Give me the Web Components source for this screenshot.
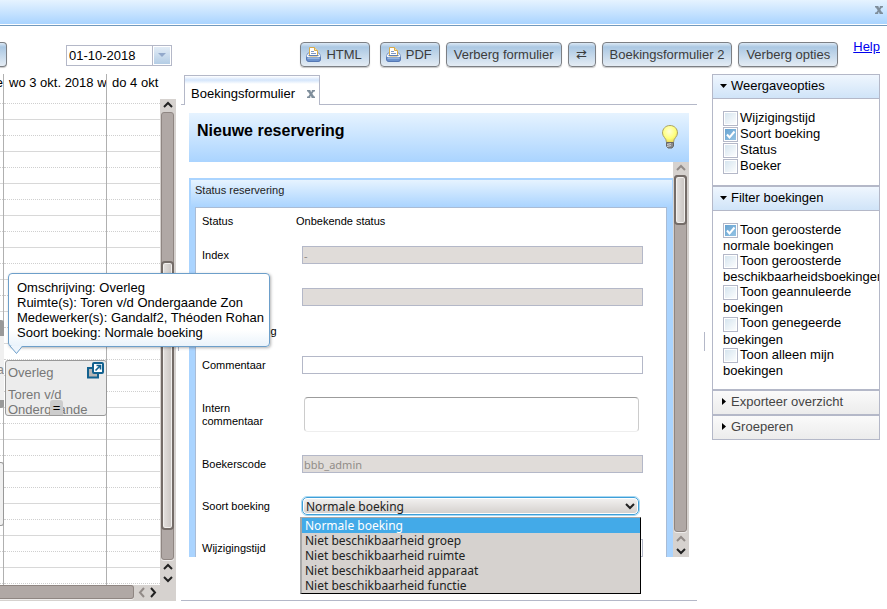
<!DOCTYPE html>
<html lang="nl">
<head>
<meta charset="utf-8">
<title>Boekingen</title>
<style>
  body {
    margin: 0;
    background: #fff;
    color: #000;
    font: 13px/15px "Liberation Sans", Arial, sans-serif;
    --line: #b4b8c8;
    --blue: #aad4ff;
    --blue-light: #e6f3ff;
  }
</style>
</head>
<body>
<booking-app></booking-app>

<script>
function attach(el, html) {
  const template = document.createElement('template');
  template.innerHTML = html;
  el.attachShadow({mode: 'open'});
  el.shadowRoot.appendChild(template.content.cloneNode(true));
}

class CloseIcon extends HTMLElement {
  constructor() {
    super();
    attach(this, `
    <style>
      :host {
        display: block;
      }
      button {
        display: block;
        padding: 0;
        border: none;
        background: none;
      }
      svg {
        display: block;
      }
    </style>
    <button aria-label="Sluiten">
      <svg width="8" height="8" viewBox="0 0 8 8" fill="none" stroke="#7f8e9b">
        <path d="M1.8 .8 L6.2 7.2" stroke-width="2.4"/>
        <path d="M6.2 .8 L1.8 7.2" stroke-width="1.8"/>
        <path d="M0 .7 H3.4 M4.8 .7 H8 M0 7.300 H3.2 M4.6 7.300 H8" stroke-width="1.4"/>
      </svg>
    </button>
    `);
  }
}
customElements.define('close-icon', CloseIcon);

class TitleBar extends HTMLElement {
  constructor() {
    super();
    attach(this, `
    <style>
      :host {
        display: flex;
        flex: none;
        justify-content: flex-end;
        box-sizing: border-box;
        height: 26px;
        padding: 6px 4px 0;
        border-bottom: 1px solid #7299bd;
        background: linear-gradient(var(--blue-light), var(--blue)) 0 0 / 100% 24px no-repeat;
      }
    </style>
    <close-icon></close-icon>
    `);
  }
}
customElements.define('title-bar', TitleBar);

class ToolButton extends HTMLElement {
  constructor() {
    super();
    attach(this, `
    <style>
      :host {
        display: block;
      }
      button {
        display: flex;
        align-items: center;
        justify-content: center;
        gap: 5px;
        box-sizing: border-box;
        min-width: 28px;
        height: 25px;
        padding: 0 7px 1px;
        border: 1px solid #7c7f84;
        border-radius: 4px;
        background: linear-gradient(#dce9f5, #abc8e3 4px, #e4ecf4);
        box-shadow: 0 1px 1px #c8c8c8;
        color: #3c3c3c;
        font: inherit;
        white-space: nowrap;
      }
      :host([printer]) button {
        padding-left: 5px;
      }
      :host([cut]) button {
        min-width: 7px;
        padding: 0;
        border-left: none;
        border-radius: 0 4px 4px 0;
      }
      svg {
        display: none;
      }
      :host([printer]) svg {
        display: block;
      }
    </style>
    <button>
      <svg width="15" height="15" viewBox="0 0 15 15">
        <path d="M2 6 L.5 8.5 V12 Q.5 14.5 3 14.5 H12 Q14.5 14.5 14.5 12 V8.5 L13 6 Z" fill="#f3f7fc" stroke="#7d97c4"/>
        <path d="M.5 10.5 H14.5 V12 Q14.5 14.5 12 14.5 H3 Q.5 14.5 .5 12 Z" fill="#6d94cf" stroke="#5578b4"/>
        <path d="M1.5 11 H13.5" stroke="#c2d8f4"/>
        <path d="M3.5 9 V.5 H8.5 L11.5 3.5 V9 Z" fill="#fff" stroke="#d8ab4c"/>
        <path d="M8.5 .5 V3.5 H11.5" fill="#f5e2ac" stroke="#d8ab4c"/>
        <path d="M5 4.5 H8 M5 6.5 H10" stroke="#7d97c4"/>
        <path d="M2.5 8.5 H12.5" stroke="#5d7eb6"/>
      </svg>
      <slot></slot>
    </button>
    `);
    if (this.hasAttribute('name')) {
      this.shadowRoot.querySelector('button').setAttribute('aria-label', this.getAttribute('name'));
    }
  }
}
customElements.define('tool-button', ToolButton);

class DateBox extends HTMLElement {
  constructor() {
    super();
    attach(this, `
    <style>
      :host {
        display: flex;
        box-sizing: border-box;
        width: 106px;
        height: 21px;
        border: 1px solid var(--line);
      }
      input {
        flex: 1;
        min-width: 0;
        padding: 0 2px;
        border: none;
        font: inherit;
        color: inherit;
      }
      button {
        display: flex;
        align-items: center;
        justify-content: center;
        width: 18px;
        padding: 0 0 2px;
        border: 1px solid #fff;
        outline: 1px solid var(--line);
        background: linear-gradient(#e2ecf6, #b4cde5);
      }
    </style>
    <input type="text" aria-label="Datum" value="01-10-2018">
    <button aria-label="Kalender">
      <svg width="8" height="4"><path d="M0 0 H8 L4 4 Z" fill="#93a9cb"/></svg>
    </button>
    `);
  }
}
customElements.define('date-box', DateBox);

class ToolBar extends HTMLElement {
  constructor() {
    super();
    attach(this, `
    <style>
      :host {
        display: flex;
        flex: none;
        align-items: flex-start;
        box-sizing: border-box;
        height: 48px;
        padding: 13px 7px 0 0;
      }
      date-box {
        margin: 6px 0 0 59px;
      }
      tool-button {
        margin-top: 3px;
      }
      .actions {
        display: flex;
        gap: 6px;
        margin: 0 15px 0 auto;
      }
      .html {
        margin-right: 4px;
      }
      a {
        color: #00e;
      }
    </style>
    <tool-button cut name="Volgende"></tool-button>
    <date-box></date-box>
    <div class="actions">
      <tool-button printer class="html">HTML</tool-button>
      <tool-button printer>PDF</tool-button>
      <tool-button>Verberg formulier</tool-button>
      <tool-button>⇄</tool-button>
      <tool-button>Boekingsformulier 2</tool-button>
      <tool-button>Verberg opties</tool-button>
    </div>
    <a href="#">Help</a>
    `);
  }
}
customElements.define('tool-bar', ToolBar);

// --before, --thumb and --after share out the trough
class ScrollBar extends HTMLElement {
  constructor() {
    super();
    attach(this, `
    <style>
      :host {
        display: flex;
        flex-direction: column;
        flex: none;
        width: 16px;
        background: #d6d2cf;
      }
      :host([horizontal]) {
        flex-direction: row;
        width: auto;
        height: 16px;
      }
      .trough {
        display: flex;
        flex-direction: column;
        flex: 1;
        box-sizing: border-box;
        min-height: 0;
        margin: 0 2px 0 1px;
        border: 1px solid #8f8682;
        border-radius: 3px;
        background: #b0a8a5;
        box-shadow: 0 1px 0 #efedec;
      }
      :host([horizontal]) .trough {
        margin: 0 0 2px;
        border-left: none;
        border-radius: 0 3px 3px 0;
      }
      .before {
        flex: var(--before, 0) 0 0;
      }
      .thumb {
        flex: var(--thumb, 0) 0 0;
        box-sizing: border-box;
        margin: -1px;
        border: 2px solid #746c68;
        border-radius: 4px;
        background: linear-gradient(90deg, #e4e1df, #c9c4c1);
        box-shadow: inset 0 0 0 1px #f1efed;
      }
      :host([horizontal]) .thumb {
        display: none;
      }
      .after {
        flex: var(--after, 1) 0 0;
      }
      svg {
        display: block;
        flex: none;
        fill: none;
        stroke: #222;
        stroke-width: 2;
      }
      .off, :host([at-top]) .up {
        stroke: #928b88;
      }
      .side, :host([horizontal]) .vert {
        display: none;
      }
      :host([horizontal]) .side {
        display: block;
      }
    </style>
    <svg class="vert up" width="16" height="13"><path d="M4 8 L8 4 L12 8"/></svg>
    <div class="trough"><div class="before"></div><div class="thumb"></div><div class="after"></div></div>
    <svg class="vert up" width="16" height="13"><path d="M4 9 L8 5 L12 9"/></svg>
    <svg class="vert" width="16" height="12"><path d="M4 4 L8 8 L12 4"/></svg>
    <svg class="side off" width="13" height="16"><path d="M10 3 L6 7.5 L10 12"/></svg>
    <svg class="side" width="29" height="16"><path d="M4 3 L8 7.5 L4 12"/></svg>
    `);
  }
}
customElements.define('scroll-bar', ScrollBar);

class DayColumn extends HTMLElement {
  constructor() {
    super();
    attach(this, `
    <style>
      :host {
        display: flex;
        flex-direction: column;
        min-width: 0;
        border-right: 1px solid #b0b0b0;
      }
      :host([last]) {
        border-right: none;
      }
      .name {
        flex: none;
        box-sizing: border-box;
        height: 25px;
        padding: 1px 0 0 5px;
        overflow: hidden;
        white-space: nowrap;
      }
      :host([cut]) .name {
        padding-left: 0;
        direction: rtl;
      }
      .hours {
        position: relative;
        flex: 1;
        min-height: 0;
      }
      .rows {
        height: 100%;
        overflow: hidden;
      }
      .rows div {
        box-sizing: border-box;
        height: 16px;
        border-bottom: 1px solid #d8d8d8;
      }
      .rows div:nth-child(odd) {
        border-bottom: 1px dotted #cfcfcf;
      }
      .rows div:first-child {
        height: 5px;
      }
    </style>
    <div class="name"></div>
    <div class="hours">
      <div class="rows">${'<div></div>'.repeat(31)}</div>
      <slot></slot>
    </div>
    `);
    this.shadowRoot.querySelector('.name').textContent = this.getAttribute('name');
  }
}
customElements.define('day-column', DayColumn);

class BookingEvent extends HTMLElement {
  constructor() {
    super();
    attach(this, `
    <style>
      :host {
        display: block;
        position: absolute;
        box-sizing: border-box;
        overflow: hidden;
        border: 1px solid #999;
        border-radius: 3px;
        background: #ececec;
        color: #777;
      }
      header {
        display: flex;
        justify-content: space-between;
        padding: 1px 2px 0;
      }
      header span {
        padding-top: 3px;
      }
      p {
        margin: 7px 2px 0;
      }
      .grip {
        position: absolute;
        left: 44px;
        bottom: 0;
        width: 13px;
        height: 15px;
        background: #ccc;
        border-radius: 3px 3px 0 0;
        color: #000;
        text-align: center;
      }
    </style>
    <header>
      <span><slot name="title"></slot></span>
      <svg width="17" height="17" viewBox="0 0 17 17">
        <path d="M5 6 H1 V15.5 H11 V12" fill="#b5b5b5" stroke="#12618f" stroke-width="2"/>
        <rect x="6" y="1" width="10" height="10" rx="1" fill="#fff" stroke="#12618f" stroke-width="2"/>
        <path d="M8.5 8.5 L13 4 M9.5 3.5 H13.5 V7.5" fill="none" stroke="#12618f" stroke-width="1.6"/>
      </svg>
    </header>
    <p><slot></slot></p>
    <div class="grip">=</div>
    `);
  }
}
customElements.define('booking-event', BookingEvent);

class WeekCalendar extends HTMLElement {
  constructor() {
    super();
    attach(this, `
    <style>
      :host {
        display: flex;
        flex-direction: column;
        flex: none;
        width: 176px;
      }
      .top {
        display: flex;
        flex: 1;
        min-height: 0;
      }
      .days {
        display: grid;
        grid-template-columns: 4px 103px 1fr;
        flex: 1;
        min-width: 0;
      }
      .vertical {
        margin-top: 25px;
        --before: 150;
        --thumb: 268;
        --after: 30;
      }
      .sliver {
        position: absolute;
        left: 0;
        box-sizing: border-box;
        width: 4px;
        overflow: hidden;
        color: #888;
        background: #f0f0f0;
      }
      .past {
        top: 221px;
        height: 88px;
        border: solid #999;
        border-width: 16px 0 8px;
        border-radius: 0 3px 3px 0;
        padding-top: 26px;
        direction: rtl;
      }
      .later {
        top: 363px;
        height: 64px;
        border: 1px solid #999;
        border-left: none;
        border-radius: 0 3px 3px 0;
      }
      booking-event {
        left: 1px;
        top: 261px;
        width: 102px;
        height: 56px;
      }
    </style>
    <div class="top">
      <div class="days">
        <day-column cut name="e">
          <div class="sliver past">a</div>
          <div class="sliver later"></div>
        </day-column>
        <day-column name="wo 3 okt. 2018 w">
          <booking-event><span slot="title">Overleg</span>Toren v/d Ondergaande</booking-event>
        </day-column>
        <day-column last name="do 4 okt"></day-column>
      </div>
      <scroll-bar class="vertical"></scroll-bar>
    </div>
    <scroll-bar horizontal></scroll-bar>
    `);
  }
}
customElements.define('week-calendar', WeekCalendar);

class InfoBalloon extends HTMLElement {
  constructor() {
    super();
    attach(this, `
    <style>
      :host {
        display: block;
        position: absolute;
        z-index: 2;
        padding: 6px 5px 6px 8px;
        border: 1px solid #6d9fca;
        border-radius: 4px;
        background: linear-gradient(#fff 78%, #eaf3fb);
        box-shadow: 1px 1px 3px rgba(0, 0, 0, .3);
        white-space: nowrap;
      }
      svg {
        position: absolute;
        left: 1px;
        top: 100%;
      }
    </style>
    <slot></slot>
    <svg width="13" height="9"><path d="M0 0 L6.5 7.5 L12.5 0" fill="#eef5fc" stroke="#6d9fca"/></svg>
    `);
  }
}
customElements.define('info-balloon', InfoBalloon);

class PaneSplitter extends HTMLElement {
  constructor() {
    super();
    attach(this, `
    <style>
      :host {
        display: flex;
        flex: none;
        align-items: center;
        justify-content: center;
        box-sizing: border-box;
        width: 5px;
        padding-top: 8px;
      }
      div {
        width: 1px;
        height: 19px;
        background: var(--line);
      }
    </style>
    <div></div>
    `);
  }
}
customElements.define('pane-splitter', PaneSplitter);

class FormRow extends HTMLElement {
  constructor() {
    super();
    attach(this, `
    <style>
      :host {
        display: flex;
        align-items: center;
        box-sizing: border-box;
        min-height: 42px;
        padding: 0 23px 0 6px;
        font-size: 11px;
        line-height: 13px;
      }
      :host([compact]) {
        min-height: 26px;
      }
      label {
        flex: none;
        box-sizing: border-box;
        width: 94px;
        padding-right: 10px;
      }
      input, textarea, select {
        flex: 1;
        box-sizing: border-box;
        min-width: 0;
        margin: 0 0 0 6px;
        font-family: "Noto Sans", sans-serif;
      }
      input {
        height: 18px;
        padding: 0 1px;
        border: 1px solid var(--line);
        font-size: 11px;
      }
      input:disabled {
        background: #e0dcd9;
        color: #918c88;
      }
      textarea {
        height: 35px;
        margin: 11px 4px 11px 8px;
        border: 1px solid #ccc;
        border-top-color: #9c9c9c;
        border-bottom-color: #eee;
        border-radius: 4px;
        resize: none;
      }
      .pick {
        flex: 1;
        min-width: 0;
        display: flex;
        flex-direction: column;
        margin-right: 4px;
      }
      select {
        flex: none;
        height: 18px;
        padding: 0 3px;
        appearance: none;
        border: 1px solid #3f9fd8;
        border-radius: 5px;
        outline: 1px solid #a8d8f2;
        background: linear-gradient(#f3f2f1, #d3cfcc);
        box-shadow: inset 0 0 0 1px #fff;
        color: #222;
        font-size: 12px;
      }
      .arrow {
        align-self: flex-end;
        height: 0;
        margin-right: 4px;
      }
      .arrow svg {
        display: block;
        position: relative;
        top: -12px;
        pointer-events: none;
      }
      /* no offsets: it opens where it stands in the flow, outside the scroller's clip */
      .options {
        position: absolute;
        z-index: 1;
        box-sizing: border-box;
        margin: 20px 0 0 4px;
        border: 1px solid #000;
        border-top-color: #a8a8a8;
        border-left: 2px solid #a8a8a8;
        background: #d6d2cf;
        color: #222;
        font: 12px/15px "Noto Sans", sans-serif;
      }
      .options div {
        padding: 0 3px;
        white-space: nowrap;
      }
      .options .selected {
        background: #43aae8;
        color: #fff;
      }
    </style>
    <label for="field"></label>
    `);
    this.shadowRoot.querySelector('label').textContent = this.getAttribute('label');
    this.addField(this.getAttribute('type'));
  }

  addField(type) {
    const root = this.shadowRoot;
    let field;
    if (type == 'text') {
      root.appendChild(document.createElement('slot'));
      return;
    } else if (type == 'select') {
      this.addSelect();
      return;
    } else if (type == 'area') {
      field = document.createElement('textarea');
    } else {
      field = document.createElement('input');
      field.type = 'text';
      field.value = this.getAttribute('value') || '';
      field.disabled = this.hasAttribute('disabled');
    }
    field.id = 'field';
    if (this.hasAttribute('name')) {
      field.setAttribute('aria-label', this.getAttribute('name'));
    }
    root.appendChild(field);
  }

  addSelect() {
    const names = this.getAttribute('options').split('|');
    const pick = document.createElement('div');
    pick.className = 'pick';
    pick.innerHTML = `
      <div class="options" role="listbox" aria-label="Soort boeking">
        ${names.map((n, i) => `<div role="option"${i == 0 ? ' class="selected" aria-selected="true"' : ''}>${n}</div>`).join('')}
      </div>
      <select id="field">${names.map((n) => `<option>${n}</option>`).join('')}</select>
      <div class="arrow"><svg width="10" height="7" fill="none" stroke="#222" stroke-width="2"><path d="M1 1 L5 5 L9 1"/></svg></div>
    `;
    this.shadowRoot.appendChild(pick);
    const select = pick.querySelector('select');
    const options = pick.querySelector('.options');
    new ResizeObserver(() => {
      options.style.width = select.offsetWidth + 4 + 'px';
    }).observe(select);
    select.addEventListener('keydown', (e) => {
      if (e.key == 'Escape') {
        options.hidden = true;
      }
    });
  }
}
customElements.define('form-row', FormRow);

class BookingForm extends HTMLElement {
  constructor() {
    super();
    attach(this, `
    <style>
      :host {
        display: flex;
        flex-direction: column;
        flex: 1;
        min-width: 0;
        box-sizing: border-box;
        padding-top: 1px;
        border-bottom: 1px solid var(--line);
      }
      .tabs {
        display: flex;
        flex: none;
        height: 30px;
      }
      .tabs::before, .tabs::after {
        content: "";
        width: 3px;
        border-bottom: 1px solid var(--line);
      }
      .tabs::after {
        flex: 1;
      }
      .tab {
        display: flex;
        align-items: center;
        gap: 12px;
        padding: 6px 4px 0 6px;
        border: 1px solid var(--line);
        border-bottom: none;
        background: linear-gradient(#fff, #d4e5fb 4px, #fff 8px);
      }
      .content {
        display: flex;
        flex-direction: column;
        flex: 1;
        min-height: 0;
        padding: 8px 8px 43px;
      }
      .heading {
        display: flex;
        flex: none;
        justify-content: space-between;
        box-sizing: border-box;
        height: 49px;
        padding: 8px 10px 0 8px;
        background: linear-gradient(var(--blue-light), var(--blue));
      }
      h1 {
        margin: 0;
        font-size: 16px;
        line-height: 19px;
      }
      .heading svg {
        margin-top: 3px;
      }
      .scroller {
        display: flex;
        flex: 1;
        min-height: 0;
      }
      .view {
        flex: 1;
        min-width: 0;
        overflow: hidden;
      }
      section {
        margin-top: 16px;
        padding: 0 4px 4px;
        border: 2px solid var(--blue);
        border-right-width: 1px;
        padding-right: 5px;
        background: linear-gradient(var(--blue-light), var(--blue) 27px);
      }
      h2 {
        margin: 0;
        font-size: 11px;
        line-height: 13px;
        font-weight: normal;
        padding: 4px 0 10px;
        color: #222;
      }
      .rows {
        border: 1px solid #a9bcd6;
        background: #fff;
      }
      scroll-bar {
        --thumb: 47;
        --after: 310;
      }
    </style>
    <div class="tabs">
      <div class="tab">Boekingsformulier <close-icon></close-icon></div>
    </div>
    <div class="content">
      <div class="heading">
        <h1>Nieuwe reservering</h1>
        <svg width="18" height="26" viewBox="0 0 18 26">
          <defs>
            <radialGradient id="glow" cx=".45" cy=".35" r=".6">
              <stop offset="0" stop-color="#ffffd8"/>
              <stop offset=".7" stop-color="#ffff7c"/>
              <stop offset="1" stop-color="#eedf60"/>
            </radialGradient>
          </defs>
          <path d="M9 1.5 C4.5 1.5 1.5 4.8 1.5 9 C1.5 13 5.5 14 5.5 18.5 H12.5 C12.5 14 16.5 13 16.5 9 C16.5 4.8 13.5 1.5 9 1.5 Z" fill="url(#glow)" stroke="#aaa36a"/>
          <path d="M5.5 18.5 H12.5 V22 L11 24 H7 L5.5 22 Z" fill="#8a8a8a" stroke="#666"/>
          <path d="M6 20.5 L10 19.5 M6 22.5 L10 21.5" stroke="#d0d0d0"/>
        </svg>
      </div>
      <div class="scroller">
        <div class="view">
          <section>
            <h2>Status reservering</h2>
            <div class="rows">
              <form-row compact label="Status" type="text">Onbekende status</form-row>
              <form-row label="Index" value="-" disabled></form-row>
              <form-row name="Omschrijving" disabled></form-row>
              <form-row compact label="Terugkoppeling" type="text"></form-row>
              <form-row label="Commentaar"></form-row>
              <form-row label="Intern commentaar" type="area"></form-row>
              <form-row label="Boekerscode" value="bbb_admin" disabled></form-row>
              <form-row label="Soort boeking" type="select" options="Normale boeking|Niet beschikbaarheid groep|Niet beschikbaarheid ruimte|Niet beschikbaarheid apparaat|Niet beschikbaarheid functie"></form-row>
              <form-row label="Wijzigingstijd"></form-row>
            </div>
          </section>
        </div>
        <scroll-bar at-top></scroll-bar>
      </div>
    </div>
    `);
  }
}
customElements.define('booking-form', BookingForm);

class OptionCheck extends HTMLElement {
  constructor() {
    super();
    attach(this, `
    <style>
      :host {
        display: block;
      }
      label {
        display: block;
      }
      input {
        appearance: none;
        box-sizing: border-box;
        width: 15px;
        height: 15px;
        margin: 0 2px 0 0;
        border: 1px solid var(--line);
        background: linear-gradient(135deg, #d3e3ee, #fff);
        box-shadow: inset 0 0 0 1px #fff;
        vertical-align: middle;
      }
      input:checked {
        background: url('data:image/svg+xml,<svg xmlns="http://www.w3.org/2000/svg" width="13" height="13"><path d="M3 6.5 L5.5 9.5 L10.5 3.5" fill="none" stroke="white" stroke-width="2"/></svg>') center no-repeat,
          linear-gradient(135deg, #64a0cf, #98c6e6);
      }
    </style>
    <label><input type="checkbox"><slot></slot></label>
    `);
    this.shadowRoot.querySelector('input').checked = this.hasAttribute('checked');
  }
}
customElements.define('option-check', OptionCheck);

class OptionPane extends HTMLElement {
  constructor() {
    super();
    attach(this, `
    <style>
      :host {
        display: block;
        border: 1px solid var(--line);
        overflow: hidden;
      }
      button {
        display: flex;
        align-items: center;
        gap: 4px;
        width: 100%;
        height: 23px;
        padding: 0 0 2px 7px;
        border: none;
        background: linear-gradient(#fafafa, #ececec);
        color: #444;
        font: inherit;
      }
      svg {
        fill: #000;
        transform: rotate(-90deg);
      }
      .body {
        display: none;
        padding: 11px 10px;
        border-top: 1px solid var(--line);
      }
      :host([open]) button {
        background: linear-gradient(#eff6fe, #d0e4f8);
        color: #000;
      }
      :host([open]) svg {
        transform: none;
      }
      :host([open]) .body {
        display: block;
      }
    </style>
    <button><svg width="7" height="7"><path d="M0 2 H7 L3.5 6 Z"/></svg><span></span></button>
    <div class="body"><slot></slot></div>
    `);
    this.shadowRoot.querySelector('span').textContent = this.getAttribute('name');
    this.shadowRoot.querySelector('button').addEventListener('click', () => {
      this.toggleAttribute('open');
    });
  }
}
customElements.define('option-pane', OptionPane);

class BookingApp extends HTMLElement {
  constructor() {
    super();
    attach(this, `
    <style>
      :host {
        display: flex;
        flex-direction: column;
        box-sizing: border-box;
        height: 100vh;
        padding-bottom: 8px;
        overflow: hidden;
      }
      main {
        position: relative;
        display: flex;
        flex: 1;
        min-height: 0;
        padding-right: 7px;
      }
      aside {
        flex: none;
        width: 168px;
      }
      .wide {
        width: 15px;
      }
      info-balloon {
        left: 8px;
        top: 199px;
      }
    </style>
    <title-bar></title-bar>
    <tool-bar></tool-bar>
    <main>
      <week-calendar></week-calendar>
      <pane-splitter></pane-splitter>
      <booking-form></booking-form>
      <pane-splitter class="wide"></pane-splitter>
      <aside>
        <option-pane open name="Weergaveopties">
          <option-check>Wijzigingstijd</option-check>
          <option-check checked>Soort boeking</option-check>
          <option-check>Status</option-check>
          <option-check>Boeker</option-check>
        </option-pane>
        <option-pane open name="Filter boekingen">
          <option-check checked>Toon geroosterde normale boekingen</option-check>
          <option-check>Toon geroosterde beschikbaarheidsboekingen</option-check>
          <option-check>Toon geannuleerde boekingen</option-check>
          <option-check>Toon genegeerde boekingen</option-check>
          <option-check>Toon alleen mijn boekingen</option-check>
        </option-pane>
        <option-pane name="Exporteer overzicht"></option-pane>
        <option-pane name="Groeperen"></option-pane>
      </aside>
      <info-balloon>
        Omschrijving: Overleg<br>
        Ruimte(s): Toren v/d Ondergaande Zon<br>
        Medewerker(s): Gandalf2, Théoden Rohan<br>
        Soort boeking: Normale boeking
      </info-balloon>
    </main>
    `);
  }
}
customElements.define('booking-app', BookingApp);
</script>
</body>
</html>
